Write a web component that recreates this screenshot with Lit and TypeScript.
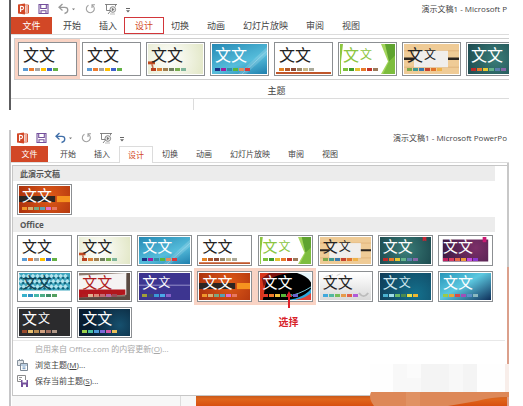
import { LitElement, html, svg, css, nothing } from "lit";
import { customElement, property } from "lit/decorators.js";

interface Theme {
  id: string;
  swatches: string[];
  art?: unknown;
}

const checks = Array.from({ length: 33 }, (_, i) => {
  const row = Math.floor(i / 11);
  const x = (i % 11) * 5 + (row % 2 ? 2 : 0);
  const y = row * 6 + 1;
  return svg`<path d="M${x} ${y}l2.5 2.5-2.5 2.5-2.5-2.5z" fill="#b4e2ec"/><path d="M${x + 2.5} ${y + 3}l1.6 1.6-1.6 1.6-1.6-1.6z" fill="#0f5c74"/>`;
});

const THEMES: Record<string, Theme> = {
  office: { id: "office", swatches: ["#5b9bd5", "#ed7d31", "#a5a5a5", "#ffc000", "#3f62cc", "#63b145"] },
  facet: {
    id: "facet",
    swatches: ["#b9401f", "#d98238", "#a08050", "#6f8060", "#78ad50", "#7fb59a"],
    art: svg`<path d="M0 18h7v3H0z" fill="#c04a20"/><path d="M3 21h2l1 6H5z" fill="#c46a4a"/>`,
  },
  blue: {
    id: "blue",
    swatches: ["#1b2f86", "#a01d9c", "#2f8fa8", "#58b53c", "#e58a60", "#d8373b"],
    art: svg`<path d="M26 31L55 3v8L34 31z" fill="#fff" opacity=".16"/><path d="M30 31L55 7" stroke="#bfe8f5" stroke-width=".6" opacity=".7"/>`,
  },
  rust: {
    id: "rust",
    swatches: ["#e48424", "#b3592a", "#8b4a35", "#9b8a6a", "#c8b98a", "#a9a99a"],
    art: svg`<path d="M0 29h55v2H0z" fill="#c0562a"/>`,
  },
  green: {
    id: "green",
    swatches: ["#7cc13a", "#3f9b2c", "#e3c234", "#e8792b", "#c43428", "#9a7a5a"],
    art: svg`<path d="M0 0h3L1 18v13H0z" fill="#8cc63f"/><path d="M41 0h14v31H41l7-13z" fill="#a4d55c"/><path d="M45 0h10v14L49 18z" fill="#5fa32f"/><path d="M55 12v19H43l6-13z" fill="#7dbd3e"/>`,
  },
  wood: {
    id: "wood",
    swatches: ["#7fa84a", "#3f9a92", "#3b78ac", "#c5432f", "#e0742c", "#eeb24a"],
    art: svg`<path d="M0 7h55M0 24h55" stroke="#e0b47c" stroke-width="1"/><path d="M0 14h55v2.5H0z" fill="#2b241e"/><path d="M10 7h34v17H10z" fill="#f0eeec"/>`,
  },
  teal: {
    id: "teal",
    swatches: ["#b92a2a", "#e5762a", "#e6c832", "#63b28a", "#5b7fae", "#8567a6"],
    art: svg`<path d="M46 0h4v5l-2-1-2 1z" fill="#c42836"/>`,
  },
  purple: {
    id: "purple",
    swatches: ["#c2215f", "#d83a60", "#e86a4a", "#ee9a3a", "#c44ae0", "#8a3ad0"],
    art: svg`<path d="M1 1h53v29H1z" fill="none" stroke="#fff" stroke-width="4"/><path d="M46 0h4v6h-4z" fill="#c81a72"/>`,
  },
  check: {
    id: "check",
    swatches: ["#38b2cc", "#2f8fc0", "#45b8a8", "#4fae88", "#3f8f68", "#55a060"],
    art: svg`${checks}<path d="M0 20h55v11H0z" fill="#fff"/>`,
  },
  report: {
    id: "report",
    swatches: ["#b01c20", "#e2b090", "#d88a78", "#c46a70", "#b568a0", "#9a4a58"],
    art: svg`<path d="M51 0h4v31H0v-3l50-1z" fill="#5a4a42"/><path d="M0 3l51-3v25L0 27z" fill="#f5f3f3"/><path d="M0 19h50v6L0 28z" fill="#b2161c"/>`,
  },
  indigo: {
    id: "indigo",
    swatches: ["#a0a03a", "#3d4a70", "#3a9ad8", "#4aaae8", "#8a62c8", "#3d3590"],
    art: svg`<path d="M0 14h55" stroke="#b8b4e0" stroke-width=".8"/>`,
  },
  ember: {
    id: "ember",
    swatches: ["#f0962a", "#d8b070", "#7aa880", "#5aa0b0", "#e070c8", "#e87860"],
    art: svg`<path d="M0 11.500h39v7H0z" fill="#2c2522"/><path d="M41 11.500h14v7H41z" fill="#f6931f"/>`,
  },
  flame: {
    id: "flame",
    swatches: ["#e03a2a", "#f07a2a", "#f0c23a", "#58b83a", "#2aa898", "#6a62d0"],
    art: svg`<path d="M0 0h14C4 6 6 20 3 31H0z" fill="#d8361c"/><path d="M10 0h24C20 1 8 6 4 16L2 6z" fill="#7c1610"/><path d="M40 0h15v11C52 5 46 2 40 0z" fill="#e8f7fb"/><path d="M30 31c12-2 20-6 25-13v13z" fill="#2aa8dc"/><path d="M38 31c8-2 13-4 17-8v8z" fill="#e04438"/><path d="M28 27q14-2 27-11" stroke="#7fd8f0" fill="none"/>`,
  },
  pearl: {
    id: "pearl",
    swatches: ["#3fa8dc", "#52b8a0", "#78bc58", "#e69a4a", "#e0604a", "#b05ad8"],
    art: svg`<path d="M42 23q5 7 10 0" stroke="#bbb" stroke-width="2" fill="none"/><path d="M6 4l8-2M18 3l4-2" stroke="#ccc" stroke-width="1"/>`,
  },
  deep: { id: "deep", swatches: ["#4ab0d0", "#a0dce8", "#6ab868", "#4a8a50", "#e8e04a", "#eeb832"] },
  cyan: { id: "cyan", swatches: ["#9acb4a", "#e6a63a", "#d84a48", "#a050b8", "#5a90c8", "#8ab8c0"] },
  coal: { id: "coal", swatches: ["#9a4a2c", "#e8c070", "#b88a50", "#d0a080", "#a07060", "#b09888"] },
  navy: { id: "navy", swatches: ["#9ad04a", "#48c0a0", "#4a98d8", "#7a68d8", "#d058a8", "#e8c058"] },
};

const RIBBON = ["office", "office", "facet", "blue", "rust", "green", "wood", "teal"];
const OFFICE = [
  "office", "facet", "blue", "rust", "green", "wood", "teal", "purple",
  "check", "report", "indigo", "ember", "flame", "pearl", "deep", "cyan",
  "coal", "navy",
];

@customElement("theme-thumb")
class ThemeThumb extends LitElement {
  @property() name = "office";
  @property({ type: Boolean, reflect: true }) large = false;
  @property({ type: Boolean, reflect: true }) selected = false;

  static styles = css`
    :host { display: block; flex: none; width: 55px; height: 31px; }
    :host([large]) { width: 59px; height: 34px; }
    :host([selected]) { box-shadow: 0 0 0 3px #f9d3c4; }
    .thumb {
      display: grid; grid-template: minmax(0, 1fr) / minmax(0, 1fr);
      width: 100%; height: 100%; box-sizing: border-box; padding: 1px;
      border: 1px solid #8c8f92; background: #fff; color: #222; overflow: hidden;
      font-family: "Noto Sans CJK SC", sans-serif; text-align: left; border-radius: 0;
    }
    .canvas, .art, .face { grid-area: 1 / 1; min-width: 0; min-height: 0; }
    .art { width: 100%; height: 100%; display: block; }
    .face { display: flex; flex-direction: column; justify-content: space-between; padding: 0 3px 3px; }
    .sample { display: flex; align-items: center; font-size: 15px; line-height: 18px; height: 18px; }
    :host([large]) .sample { font-size: 16px; line-height: 20px; height: 20px; }
    .swatches { display: flex; gap: 1px; }
    .swatch { width: 5px; height: 3px; }
    .sample .small { font-size: 12px; padding-left: 1px; }
    .facet-bg { background: radial-gradient(circle at 40% 50%, #fff, #e2e7c6); }
    .blue-bg { background: linear-gradient(160deg, #2589b4, #56bddb 60%, #1f7fae); }
    .wood-bg { background: #efcb96; }
    .teal-bg { background: radial-gradient(circle at 50% 50%, #3a7d78, #1d4b50); }
    .purple-bg { background: radial-gradient(circle at 70% 40%, #7c2f68, #35173f); }
    .check-bg { background: #3fa6be; }
    .report-bg { background: #8d7b70; }
    .indigo-bg { background: #3d3590; }
    .ember-bg { background: radial-gradient(circle at 60% 40%, #de5a18, #a92f0c); }
    .flame-bg { background: #000; }
    .pearl-bg { background: linear-gradient(#fff, #d8d8d8); }
    .deep-bg { background: radial-gradient(circle at 70% 80%, #14708c, #103c58); }
    .cyan-bg { background: linear-gradient(150deg, #2795b8, #5cc8e0 45%, #0e2f5a); }
    .coal-bg { background: #2b2b2d; }
    .navy-bg { background: radial-gradient(circle at 80% 60%, #16506e, #081c30 70%); }
    .blue, .teal, .purple, .indigo, .ember, .flame, .cyan, .coal, .navy { color: #fff; }
    .green { color: #8bc540; }
    .check { color: #123f50; }
    .report { color: #b01c20; }
    .deep { color: #cfe8f0; }
  `;

  render() {
    const t = THEMES[this.name];
    const brush = ["green", "wood", "indigo", "deep", "coal"].includes(t.id);
    return html`<button class="thumb" aria-label=${t.id} aria-pressed=${this.selected}>
      <span class="canvas ${t.id}-bg"></span>
      <svg class="art" viewBox="0 0 55 31" preserveAspectRatio="none" aria-hidden="true">${t.art ?? nothing}</svg>
      <span class="face">
        <span class="sample ${t.id}"><span>文</span><span class=${brush ? "small" : ""}>文</span></span>
        <span class="swatches">${t.swatches.map((c) => html`<i class="swatch" style="background:${c}"></i>`)}</span>
      </span>
    </button>`;
  }
}

@customElement("office-header")
class OfficeHeader extends LitElement {
  @property() caption = "";
  @property({ type: Boolean, reflect: true }) large = false;

  static styles = css`
    :host { display: block; border-bottom: 1px solid #dcdcdc; font: 8px/16px "Open Sans", "Noto Sans CJK SC", sans-serif; color: #444; }
    button { font: inherit; color: inherit; border: 0; background: none; padding: 0; margin: 0; white-space: nowrap; }
    .title-row { display: flex; align-items: center; height: 16px; }
    :host([large]) .title-row { height: 17px; }
    .tools { display: flex; gap: 8px; padding-left: 6px; }
    :host([large]) .tools { gap: 9px; padding-left: 7px; }
    .tool, .tool svg { display: block; height: 12px; }
    .title { margin-left: auto; padding-right: 2px; white-space: nowrap; }
    .tabs { display: flex; height: 16px; }
    .tab { padding: 0 9px; height: 16px; line-height: 16px; }
    .file { background: #d24726; color: #fff; width: 37px; padding: 0; margin-right: 3px; }
    .active { color: #d24726; margin-bottom: -1px; height: 17px; background: #fff; box-shadow: inset 1px 1px #dcdcdc, inset -1px 0 #dcdcdc; }
    :host([large]) .tabs, :host([large]) .tab { height: 17px; line-height: 17px; font-size: 9px; }
    :host([large]) .file { width: 41px; margin-right: 2px; }
    :host([large]) .active { border: 1px solid #d2363a; padding: 0 10px; line-height: 15px; box-shadow: none; margin: 0 -2px; }
  `;

  render() {
    const undo = this.large ? "#9a9a9a" : "#3f6ea8";
    const tabs = ["开始", "插入", "设计", "切换", "动画", "幻灯片放映", "审阅", "视图"];
    return html`
      <div class="title-row">
        <div class="tools">
          <button class="tool" aria-label="PowerPoint"><svg width="11" viewBox="0 0 11 12">
            <path d="M6 2h4.500v8H6z" fill="#fff" stroke="#d24726" stroke-width=".9"/><path d="M7.500 4h2.500M7.500 6h2.500M7.500 8h2.500" stroke="#d24726" stroke-width=".9"/>
            <path d="M0 1.600L7 .5v11L0 10.400z" fill="#d24726"/><path d="M2.600 9V3.400h1.300q1.600 0 1.600 1.600t-1.600 1.700H2.600" fill="none" stroke="#fff" stroke-width="1.100"/></svg></button>
          <button class="tool" aria-label="保存"><svg width="11" viewBox="0 0 11 12">
            <path d="M1 1.500h9v9H1zM2.700 1.500v4h5.600v-4M3 10.500V7.700h5v2.800" fill="none" stroke="#74509c" stroke-width="1.100"/></svg></button>
          <button class="tool" aria-label="撤消"><svg width="18" viewBox="0 0 18 12">
            <path d="M4.500 1L1 4.300l3.500 3.200M1.200 4.300h5.600q3 0 3 2.800T6.500 10.500" fill="none" stroke=${undo} stroke-width="1.300"/><path d="M14 5.500h3l-1.500 1.700z" fill="#777"/></svg></button>
          <button class="tool" aria-label="重复"><svg width="11" viewBox="0 0 11 12">
            <path d="M3.500 2.200A4 4 0 1 0 7.500 2.400M7 5V1.700h3" fill="none" stroke="#a0a0a0" stroke-width="1.100"/></svg></button>
          <button class="tool" aria-label="放映"><svg width="12" viewBox="0 0 12 12">
            <path d="M0 1.500h12M1.500 1.500v6H5M10.500 1.500v2M3 11l2.500-3" fill="none" stroke="#777" stroke-width=".9"/><circle cx="7.800" cy="6.500" r="2.800" fill="#fff" stroke="#777" stroke-width=".9"/><path d="M7 5l2.300 1.500L7 8zM5 11h5" fill="#777" stroke="#777" stroke-width=".5"/></svg></button>
          <button class="tool" aria-label="自定义"><svg width="4" viewBox="0 0 4 12"><path d="M0 5h4v1H0zM0 7.300h4L2 9.500z" fill="#666"/></svg></button>
        </div>
        <div class="title">${this.caption}</div>
      </div>
      <nav class="tabs">
        <button class="tab file">文件</button>
        ${tabs.map((t) => html`<button class="tab ${t === "设计" ? "active" : ""}">${t}</button>`)}
      </nav>`;
  }
}

@customElement("app-root")
class AppRoot extends LitElement {
  static styles = css`
    :host {
      display: block; box-sizing: border-box; height: 100vh; overflow: hidden; padding: 0 14px 0 9px; background: #fff;
      font: 8px/16px "Open Sans", "Noto Sans CJK SC", sans-serif; color: #444;
    }
    button { font: inherit; color: inherit; border: 0; background: none; padding: 0; margin: 0; }
    .window { border-left: 2px solid #5c5c5e; overflow: hidden; }
    .ribbon-gallery { display: flex; gap: 5px; margin: 3px 0 0 3px; padding: 3px; border: 1px solid #cfcfcf; border-right: 0; overflow: hidden; }
    .group { height: 18px; border-bottom: 1px solid #dcdcdc; font-size: 9px; line-height: 22px; text-align: center; padding-left: 33px; }
    .pane { height: 11px; width: 182px; border-right: 1px solid #dcdcdc; }
    .lower { position: relative; margin-top: 20px; border-left-color: #c6c6c8; }
    .body { padding: 2px 2px 0 1px; background: linear-gradient(#c8c8c8 104px, #dba08c 104px) right / 2px 100% no-repeat; }
    .menu { border: 1px solid #c6c6c6; border-right: 0; background: #fff; padding-bottom: 6px; }
    .heading { margin: 0 12px 0 0; padding-left: 7px; height: 15px; line-height: 15px; background: #ececec; font-size: 8px; font-weight: 700; color: #555; }
    .own { padding: 3px 4px 2px; }
    .grid { display: grid; grid-template-columns: repeat(8, 55px); justify-content: space-between; row-gap: 5px; padding: 3px 14px 2px 4px; }
    .cell { position: relative; }
    .note { position: absolute; z-index: 1; top: 20px; left: 21px; display: flex; flex-direction: column; align-items: center; color: #d8222a; font: 700 10px/14px "Noto Sans CJK SC", sans-serif; white-space: nowrap; }
    .arrow { display: block; width: 6px; height: 17px; margin-bottom: 7px; }
    .commands { border-top: 1px solid #e8e8e8; margin-right: 2px; }
    .command { display: flex; align-items: center; width: 100%; height: 16px; }
    .command svg { width: 11px; height: 12px; margin: 0 7px 0 4px; }
    .command[disabled] { color: #a8a8a8; }
    .workspace { display: flex; height: 10px; background: #f7f7f7; }
    .outline { flex: none; width: 168px; border-right: 1px solid #dcdcdc; }
    .slide { flex: 1; margin-left: 15px; background: linear-gradient(#c65a1c, #e0661c 3px, #d85010); }
    .smudge { position: absolute; right: 0; bottom: 0; width: 139px; height: 43px; }
  `;

  render() {
    return html`
      <section class="window">
        <office-header large caption="演示文稿1 - Microsoft P"></office-header>
        <div class="ribbon-gallery">
          ${RIBBON.map((n, i) => html`<theme-thumb large name=${n} ?selected=${i === 0}></theme-thumb>`)}
        </div>
        <div class="group">主题</div>
        <div class="pane"></div>
      </section>

      <section class="window lower">
        <office-header caption="演示文稿1 - Microsoft PowerPo"></office-header>
        <div class="body">
          <div class="menu">
            <h2 class="heading">此演示文稿</h2>
            <div class="own"><theme-thumb name="ember"></theme-thumb></div>
            <h2 class="heading">Office</h2>
            <div class="grid">
              ${OFFICE.map((n) => html`<div class="cell">
                <theme-thumb name=${n} ?selected=${n === "ember" || n === "flame"}></theme-thumb>
                ${n === "flame" ? html`<div class="note">
                  <svg class="arrow" viewBox="0 0 6 17" aria-hidden="true"><path d="M3 0l3 6H4v11H2V6H0z" fill="#e0202a"/></svg>选择
                </div>` : nothing}
              </div>`)}
            </div>
            <div class="commands">
              <button class="command" disabled><svg aria-hidden="true"></svg>启用来自 Office.com 的内容更新(<u>O</u>)...</button>
              <button class="command"><svg viewBox="0 0 11 12" aria-hidden="true"><path d="M.5 1.500h6v5h-6zM2.500 1V0M5 1V0" fill="#e4e8ec" stroke="#7c8894" stroke-width=".9"/><path d="M3.500 4.500h7v7h-7z" fill="#fff" stroke="#7c8894"/><path d="M4 6h6M5.500 8h3M5.500 9.700h3" stroke="#5b8ab8" stroke-width=".9"/></svg>浏览主题(<u>M</u>)...</button>
              <button class="command"><svg viewBox="0 0 11 12" aria-hidden="true"><path d="M.5.500h8v6h-8z" fill="#fff" stroke="#8c8c8c"/><path d="M2 2.500h3M2 4.500h2" stroke="#999"/><path d="M4 5h7v7H4z" fill="#74509c"/><path d="M5.500 5h4v2.500h-4zM6 9.500h3V12H6z" fill="#fff"/></svg>保存当前主题(<u>S</u>)...</button>
            </div>
          </div>
          <div class="workspace"><div class="outline"></div><div class="slide"></div></div>
        </div>
        <svg class="smudge" viewBox="0 0 139 43" aria-hidden="true">
          <path d="M0 1h137v28H0z" fill="#fefefe"/>
          <path d="M23 1h84v28H23z" fill="#f8f8f8"/><path d="M51 1h28v28H51zM93 1h14v28H93z" fill="#f4f4f4"/><path d="M37 1h14v14H37z" fill="#fbfbfb"/>
          <path d="M135 1h4v28h-4z" fill="#f8eeea"/>
          <path d="M1 29h138v5q-18 0-32 4l-29 5H4q-6-8-3-14z" fill="#dd8858"/><path d="M36 29h14v14H36z" fill="#e09264"/>
        </svg>
      </section>`;
  }
}
